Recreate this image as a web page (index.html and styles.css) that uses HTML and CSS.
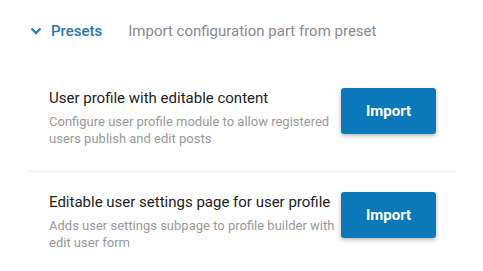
FILE: index.html
```html
<!DOCTYPE html>
<html>
<head>
<meta charset="utf-8">
<link rel="stylesheet" href="styles.css">
</head>
<body>
<div class="panel">
  <div class="header">
    <svg class="chev" width="12" height="8" viewBox="0 0 12 8"><path d="M1.5 1.5 L6 6 L10.5 1.5" fill="none" stroke="#1f78b4" stroke-width="2.2"/></svg>
    <span class="title">Presets</span>
    <span class="subtitle">Import configuration part from preset</span>
  </div>
  <div class="list">
    <div class="item">
      <div class="text">
        <div class="name">User profile with editable content</div>
        <div class="desc">Configure user profile module to allow registered users publish and edit posts</div>
      </div>
      <button class="btn">Import</button>
    </div>
    <div class="item">
      <div class="text">
        <div class="name">Editable user settings page for user profile</div>
        <div class="desc">Adds user settings subpage to profile builder with edit user form</div>
      </div>
      <button class="btn">Import</button>
    </div>
  </div>
</div>
</body>
</html>
```
FILE: styles.css
```css
html, body {
  margin: 0;
  padding: 0;
  background: #fff;
}
body {
  font-family: Roboto, "Liberation Sans", sans-serif;
}
.panel {
  padding: 21px 27px 0 28px;
}
.header {
  display: flex;
  align-items: center;
  height: 20px;
  padding-left: 2px;
  font-size: 15px;
  line-height: 20px;
}
.chev {
  display: block;
  margin-right: 9px;
}
.title {
  color: #1f78b4;
  font-weight: 500;
  margin-right: 26px;
}
.subtitle {
  color: #8a8a8a;
}
.list {
  margin-top: 26px;
}
.item {
  display: flex;
  align-items: flex-start;
  padding: 21px 20px 24px 21px;
}
.item + .item {
  border-top: 1px solid #ececec;
  padding-top: 20px;
}
.text {
  width: 286px;
  margin-right: 6px;
}
.name {
  font-size: 15px;
  line-height: 20px;
  font-weight: 400;
  color: #222;
  white-space: nowrap;
}
.desc {
  margin-top: 5px;
  font-size: 13px;
  line-height: 17px;
  color: #999;
}
.btn {
  width: 95px;
  height: 46px;
  border: none;
  border-radius: 3px;
  background: #0a78b9;
  color: #fff;
  font-family: Roboto, "Liberation Sans", sans-serif;
  font-size: 15px;
  font-weight: 700;
  box-shadow: 0 2px 4px rgba(0, 0, 0, 0.28);
  padding: 0;
  flex-shrink: 0;
}
```
